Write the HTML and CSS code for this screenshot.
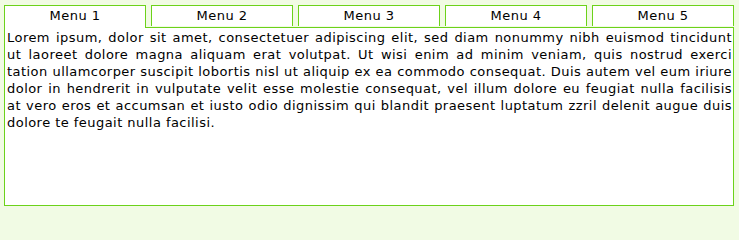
FILE: index.html
```html
<!DOCTYPE html>
<html>
<head>
<meta charset="utf-8">
<link rel="stylesheet" href="styles.css">
</head>
<body>
<div class="wrap">
  <div class="tabs">
    <div class="tab active">Menu 1</div>
    <div class="tab">Menu 2</div>
    <div class="tab">Menu 3</div>
    <div class="tab">Menu 4</div>
    <div class="tab">Menu 5</div>
  </div>
  <div class="panel">
    <p class="text">Lorem ipsum, dolor sit amet, consectetuer adipiscing elit, sed diam nonummy nibh euismod tincidunt ut laoreet dolore magna aliquam erat volutpat. Ut wisi enim ad minim veniam, quis nostrud exerci tation ullamcorper suscipit lobortis nisl ut aliquip ex ea commodo consequat. Duis autem vel eum iriure dolor in hendrerit in vulputate velit esse molestie consequat, vel illum dolore eu feugiat nulla facilisis at vero eros et accumsan et iusto odio dignissim qui blandit praesent luptatum zzril delenit augue duis dolore te feugait nulla facilisi.</p>
  </div>
</div>
</body>
</html>
```

FILE: styles.css
```css
html, body {
  margin: 0;
  padding: 0;
  background: #f1fbe4;
}
body {
  font-family: "DejaVu Sans", Verdana, sans-serif;
  font-size: 13px;
  letter-spacing: 0.46px;
  color: #000;
}
.wrap {
  width: 730px;
  padding: 5px 0 0 4px;
}
.tabs {
  display: flex;
  gap: 5px;
  position: relative;
  z-index: 1;
}
.tab {
  flex: 1;
  height: 20px;
  line-height: 20px;
  text-align: center;
  background: #fff;
  border: 1px solid #6cd21a;
  border-bottom: none;
}
.tab.active {
  height: 22px;
  margin-bottom: -1px;
}
.panel {
  background: #fff;
  border: 1px solid #6cd21a;
  padding: 0 1px 0 2px;
  box-sizing: border-box;
  height: 179px;
}
.text {
  margin: 0;
  padding-top: 1px;
  line-height: 17px;
  text-align: justify;
}
```
